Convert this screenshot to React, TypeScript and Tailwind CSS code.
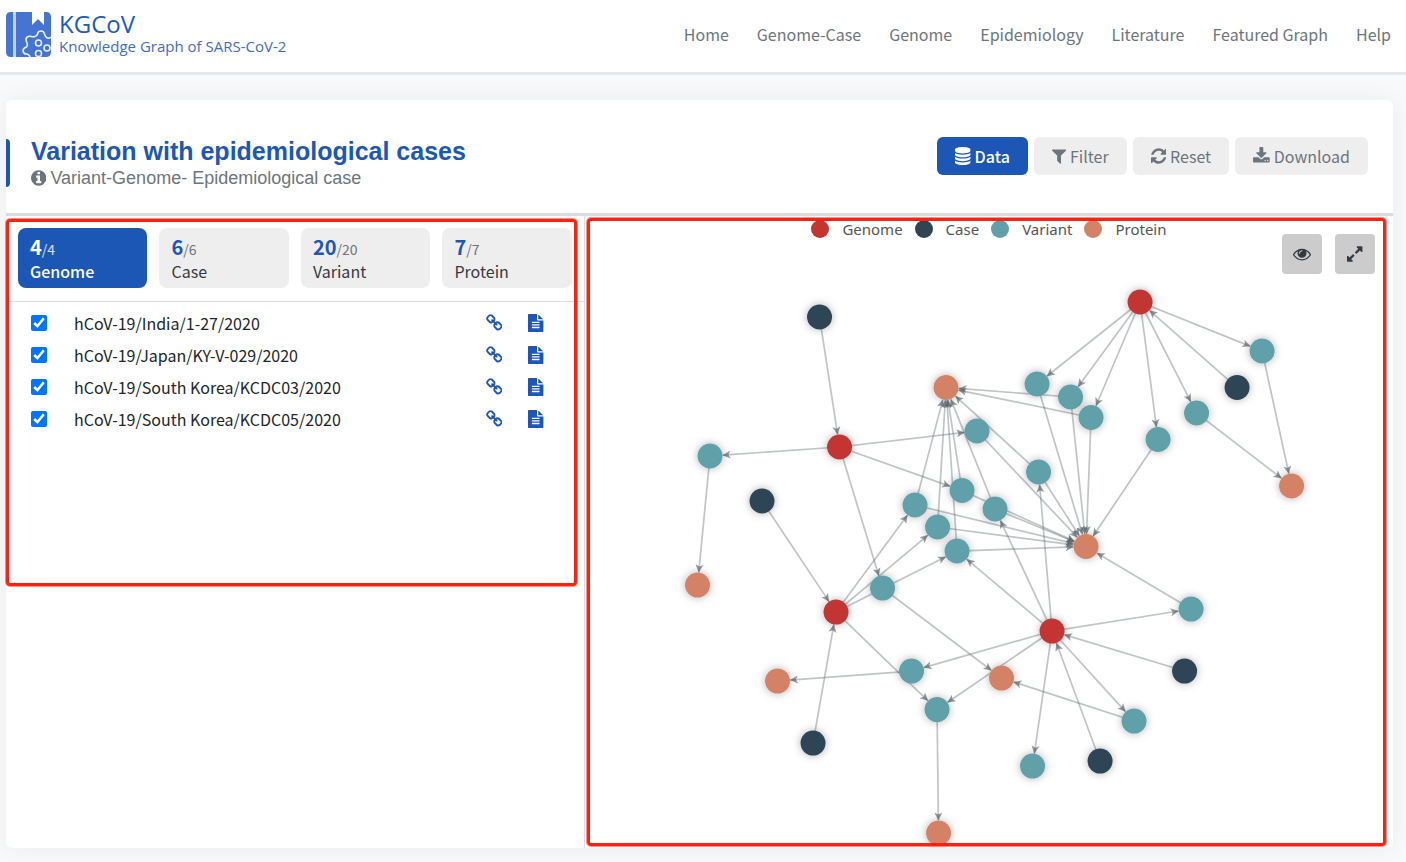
import { useState } from 'react';

type Category = 'Genome' | 'Case' | 'Variant' | 'Protein';

interface GlyphProps {
  name: keyof typeof glyphs;
  className?: string;
}

const glyphs = {
  database: {
    box: '128 0 1536 1792',
    d: 'M896 768q237 0 443-43t325-127v170q0 69-103 128t-280 93.5-385 34.5-385-34.5-280-93.5-103-128v-170q119 84 325 127t443 43zm0 768q237 0 443-43t325-127v170q0 69-103 128t-280 93.5-385 34.5-385-34.5-280-93.5-103-128v-170q119 84 325 127t443 43zm0-384q237 0 443-43t325-127v170q0 69-103 128t-280 93.5-385 34.5-385-34.5-280-93.5-103-128v-170q119 84 325 127t443 43zm0-1152q208 0 385 34.5t280 93.5 103 128v128q0 69-103 128t-280 93.5-385 34.5-385-34.5-280-93.5-103-128v-128q0-69 103-128t280-93.5 385-34.5z',
  },
  filter: {
    box: '192 0 1408 1792',
    d: 'M1595 295q17 41-14 70l-493 493v742q0 42-39 59-13 5-25 5-27 0-45-19l-256-256q-19-19-19-45v-486l-493-493q-31-29-14-70 17-39 59-39h1280q42 0 59 39z',
  },
  refresh: {
    box: '128 0 1536 1792',
    d: 'M1639 1056q0 5-1 7-64 268-268 434.5t-478 166.5q-146 0-282.5-55t-243.5-157l-129 129q-19 19-45 19t-45-19-19-45v-448q0-26 19-45t45-19h448q26 0 45 19t19 45-19 45l-137 137q71 66 161 102t187 36q134 0 250-65t186-179q11-17 53-117 8-23 30-23h192q13 0 22.5 9.5t9.5 22.5zm25-800v448q0 26-19 45t-45 19h-448q-26 0-45-19t-19-45 19-45l138-138q-148-137-349-137-134 0-250 65t-186 179q-11 17-53 117-8 23-30 23h-199q-13 0-22.5-9.5t-9.5-22.5v-7q65-268 270-434.5t480-166.5q146 0 284 55.5t245 156.5l130-129q19-19 45-19t45 19 19 45z',
  },
  download: {
    box: '64 0 1664 1792',
    d: 'M1344 1344q0-26-19-45t-45-19-45 19-19 45 19 45 45 19 45-19 19-45zm256 0q0-26-19-45t-45-19-45 19-19 45 19 45 45 19 45-19 19-45zm128-224v320q0 40-28 68t-68 28h-1472q-40 0-68-28t-28-68v-320q0-40 28-68t68-28h465l135 136q58 56 136 56t136-56l136-136h464q40 0 68 28t28 68zm-325-569q17 41-14 70l-448 448q-18 19-45 19t-45-19l-448-448q-31-29-14-70 17-39 59-39h256v-448q0-26 19-45t45-19h256q26 0 45 19t19 45v448h256q42 0 59 39z',
  },
  eye: {
    box: '0 0 1792 1792',
    d: 'M1664 960q-152-236-381-353 61 104 61 225 0 185-131.5 316.5t-316.5 131.5-316.5-131.5-131.5-316.5q0-121 61-225-229 117-381 353 133 205 333.5 326.5t434.5 121.5 434.5-121.5 333.5-326.5zm-720-384q0-20-14-34t-34-14q-125 0-214.5 89.5t-89.5 214.5q0 20 14 34t34 14 34-14 14-34q0-86 61-147t147-61q20 0 34-14t14-34zm848 384q0 34-20 69-140 230-376.5 368.5t-499.5 138.5-499.5-139-376.5-368q-20-35-20-69t20-69q140-229 376.5-368t499.5-139 499.5 139 376.5 368q20 35 20 69z',
  },
  expand: {
    box: '128 0 1536 1792',
    d: 'M883 1056q0 13-10 23l-332 332 144 144q19 19 19 45t-19 45-45 19h-448q-26 0-45-19t-19-45v-448q0-26 19-45t45-19 45 19l144 144 332-332q10-10 23-10t23 10l114 114q10 10 10 23zm781-864v448q0 26-19 45t-45 19-45-19l-144-144-332 332q-10 10-23 10t-23-10l-114-114q-10-10-10-23t10-23l332-332-144-144q-19-19-19-45t19-45 45-19h448q26 0 45 19t19 45z',
  },
  info: {
    box: '128 0 1536 1792',
    d: 'M1152 1376v-160q0-14-9-23t-23-9h-96v-512q0-14-9-23t-23-9h-320q-14 0-23 9t-9 23v160q0 14 9 23t23 9h96v320h-96q-14 0-23 9t-9 23v160q0 14 9 23t23 9h448q14 0 23-9t9-23zm-128-896v-160q0-14-9-23t-23-9h-192q-14 0-23 9t-9 23v160q0 14 9 23t23 9h192q14 0 23-9t9-23zm640 416q0 209-103 385.5t-279.5 279.5-385.5 103-385.5-103-279.5-279.5-103-385.5 103-385.5 279.5-279.5 385.5-103 385.5 103 279.5 279.5 103 385.5z',
  },
  link: {
    box: '64 0 1664 1792',
    d: 'M1520 1216q0-40-28-68l-208-208q-28-28-68-28-42 0-72 32 3 3 19 18.5t21.5 21.5 15 19 13 25.5 3.5 27.5q0 40-28 68t-68 28q-15 0-27.5-3.5t-25.5-13-19-15-21.5-21.5-18.5-19q-33 31-33 73 0 40 28 68l206 207q27 27 68 27 40 0 68-26l147-146q28-28 28-67zm-703-705q0-40-28-68l-206-207q-28-28-68-28-39 0-68 27l-147 146q-28 28-28 67 0 40 28 68l208 208q27 27 68 27 42 0 72-31-3-3-19-18.5t-21.5-21.5-15-19-13-25.5-3.5-27.5q0-40 28-68t68-28q15 0 27.5 3.5t25.5 13 19 15 21.5 21.5 18.5 19q33-31 33-73zm895 705q0 120-85 203l-147 146q-83 83-203 83-121 0-204-85l-206-207q-83-83-83-203 0-123 88-209l-88-88q-86 88-208 88-120 0-204-84l-208-208q-84-84-84-204t85-203l147-146q83-83 203-83 121 0 204 85l206 207q83 83 83 203 0 123-88 209l88 88q86-88 208-88 120 0 204 84l208 208q84 84 84 204z',
  },
  file: {
    box: '128 0 1536 1792',
    d: 'M1596 476q14 14 28 36h-472v-472q22 14 36 28zm-476 164h544v1056q0 40-28 68t-68 28h-1344q-40 0-68-28t-28-68v-1600q0-40 28-68t68-28h800v544q0 40 28 68t68 28zm160 736v-64q0-14-9-23t-23-9h-704q-14 0-23 9t-9 23v64q0 14 9 23t23 9h704q14 0 23-9t9-23zm0-256v-64q0-14-9-23t-23-9h-704q-14 0-23 9t-9 23v64q0 14 9 23t23 9h704q14 0 23-9t9-23zm0-256v-64q0-14-9-23t-23-9h-704q-14 0-23 9t-9 23v64q0 14 9 23t23 9h704q14 0 23-9t9-23z',
  },
};

const navItems = ['Home', 'Genome-Case', 'Genome', 'Epidemiology', 'Literature', 'Featured Graph', 'Help'];

const tabs: { label: Category; count: number }[] = [
  { label: 'Genome', count: 4 },
  { label: 'Case', count: 6 },
  { label: 'Variant', count: 20 },
  { label: 'Protein', count: 7 },
];

const genomes = [
  'hCoV-19/India/1-27/2020',
  'hCoV-19/Japan/KY-V-029/2020',
  'hCoV-19/South Korea/KCDC03/2020',
  'hCoV-19/South Korea/KCDC05/2020',
];

const legend: { label: Category; dot: string }[] = [
  { label: 'Genome', dot: 'bg-[#c23531]' },
  { label: 'Case', dot: 'bg-[#2f4554]' },
  { label: 'Variant', dot: 'bg-[#61a0a8]' },
  { label: 'Protein', dot: 'bg-[#d48265]' },
];

const fills: Record<string, string> = { g: '#c23531', c: '#2f4554', v: '#61a0a8', p: '#d48265' };

// first letter of the id is the category
const nodes: Record<string, [number, number]> = {
  g1: [1140, 302], g2: [839.5, 447], g3: [836, 612], g4: [1052, 631],
  c1: [819.5, 317], c2: [1237, 387.5], c3: [762, 501], c4: [813, 743], c5: [1184.5, 671], c6: [1100, 761],
  v1: [1037, 384], v2: [1070.5, 397], v3: [1091, 417.5], v4: [1158, 439.5], v5: [1196.5, 413],
  v6: [1262, 351], v7: [977, 431], v8: [1038.5, 472], v9: [962, 490.5], v10: [915, 505],
  v11: [995, 509], v12: [937.5, 527], v13: [957, 551], v14: [710, 456], v15: [882.5, 588],
  v16: [911.5, 671], v17: [937, 709.5], v18: [1032.5, 766], v19: [1134, 721], v20: [1191, 609],
  p1: [946, 387.5], p2: [1291.5, 486], p3: [1086, 546.5], p4: [697.5, 585], p5: [777.5, 681],
  p6: [1001.5, 678], p7: [938.5, 833],
};

const links: Record<string, string[]> = {
  c1: ['g2'], c2: ['g1'], c3: ['g3'], c4: ['g3'], c5: ['g4'], c6: ['g4'],
  g1: ['v1', 'v2', 'v3', 'v4', 'v5', 'v6'],
  g2: ['v7', 'v9', 'v14', 'v15'],
  g3: ['v10', 'v12', 'v13', 'v17'],
  g4: ['v8', 'v11', 'v13', 'v16', 'v17', 'v18', 'v19', 'v20'],
  v1: ['p3'], v2: ['p1', 'p3'], v3: ['p1', 'p3'], v4: ['p3'], v5: ['p2'], v6: ['p2'], v7: ['p3'],
  v8: ['p1', 'p3'], v9: ['p1', 'p3'], v10: ['p1', 'p3'], v11: ['p1', 'p3'], v12: ['p1', 'p3'],
  v13: ['p1', 'p3'], v14: ['p4'], v15: ['p6'], v16: ['p5'], v17: ['p7'], v19: ['p6'], v20: ['p3'],
};

const RADIUS = 12.5;

function Glyph({ name, className }: GlyphProps) {
  return (
    <svg viewBox={glyphs[name].box} className={className} fill="currentColor" aria-hidden="true">
      <path d={glyphs[name].d} />
    </svg>
  );
}

function Logo() {
  return (
    <a href="#" className="flex items-center gap-2 font-['Open_Sans',sans-serif] text-[#2059b6]">
      <svg viewBox="0 0 45 45" className="size-[45px]" aria-hidden="true">
        <path fill="#4674d2" d="M5 0H7V45H5Q0 45 0 40V5Q0 0 5 0zM10 0H26V13L32 7L38 13V0H40Q45 0 45 5V40Q45 45 40 45H10z" />
        <path fill="#c3d3f1" d="M7 0h3v45H7z" />
        <g fill="none" stroke="#e8effb" strokeWidth="1.6" strokeLinejoin="round">
          <path d="M45 25Q43 27 40.500 25.500Q39 24 38.500 22Q38 19 35 19Q32 19 31.500 22Q31 24 29 24.500Q27 25 25.500 24.500Q21 23.500 20 27Q20 29 21 31Q22 33 20.500 35Q17 36 17 39Q17.500 42 20.500 42Q23 42 24 45" />
          <circle cx="32.500" cy="31" r="3" />
          <circle cx="41" cy="36" r="3" />
          <circle cx="32.500" cy="41.500" r="3" />
        </g>
      </svg>
      <span className="flex flex-col">
        <span className="text-2xl leading-6 font-medium">KGCoV</span>
        <span className="text-[15px] leading-5 text-[#3f6dc2]">Knowledge Graph of SARS-CoV-2</span>
      </span>
    </a>
  );
}

function RelationGraph() {
  return (
    <svg viewBox="585 216 808 632" className="block w-full" role="img" aria-label="Variation graph">
      <defs>
        <marker id="tip" markerUnits="userSpaceOnUse" markerWidth="10" markerHeight="10" refX="8" refY="5" orient="auto">
          <path d="M8 5L0 9L2 5L0 1z" fill="#59646a" fillOpacity="0.65" />
        </marker>
        <filter id="glow" x="-80%" y="-80%" width="260%" height="260%">
          <feDropShadow dx="0" dy="0" stdDeviation="4.5" floodColor="#000" floodOpacity="0.3" />
        </filter>
      </defs>
      {Object.entries(links).flatMap(([from, targets]) =>
        targets.map((to) => {
          const [x1, y1] = nodes[from];
          const [x2, y2] = nodes[to];
          const k = RADIUS / Math.hypot(x2 - x1, y2 - y1);
          return (
            <line
              key={`${from}-${to}`}
              x1={x1}
              y1={y1}
              x2={x2 - (x2 - x1) * k}
              y2={y2 - (y2 - y1) * k}
              stroke="#5f6b71"
              strokeOpacity="0.4"
              strokeWidth="1.7"
              markerEnd="url(#tip)"
            />
          );
        })
      )}
      {Object.entries(nodes).map(([id, [cx, cy]]) => (
        <circle key={id} cx={cx} cy={cy} r={RADIUS} fill={fills[id[0]]} filter="url(#glow)" />
      ))}
    </svg>
  );
}

export default function App() {
  const [activeTab, setActiveTab] = useState<Category>('Genome');
  const [checked, setChecked] = useState<string[]>(genomes);

  const toggle = (name: string) => {
    setChecked(prev => (prev.includes(name) ? prev.filter(n => n !== name) : [...prev, name]));
  };

  const grayButton = 'flex h-[38px] items-center gap-1 rounded-md bg-[#eeeeee] px-[18px] text-[#6c757d]';

  return (
    <div className="min-h-screen bg-[#f8f9fb] pb-3.5 font-['Noto_Sans_CJK_SC',sans-serif] text-base text-[#212529]">
      <header className="flex h-[75px] items-center justify-between border-b-3 border-[#e7e7e7] bg-white pr-[15px] pb-1 pl-1.5">
        <Logo />
        <nav className="flex gap-7 leading-6 text-[#6c757d]">
          {navItems.map((item) => (
            <a key={item} href="#">{item}</a>
          ))}
        </nav>
      </header>

      <main className="mt-[25px] mr-[13px] ml-1.5 rounded-md bg-white shadow-[0_0_24px_rgba(0,0,0,0.06)]">
        <div className="flex h-[116px] items-center justify-between border-b-3 border-[#dcdcdc] pr-[25px] pb-0.5">
          <div className="flex items-end gap-[21px]">
            <span className="mb-0.5 h-12 w-1 rounded-r-sm bg-[#1c57b5]" />
            <div className="pt-3 font-['Liberation_Sans',sans-serif]">
              <h1 className="text-[25px] leading-8 font-bold text-[#1c57b5]">Variation with epidemiological cases</h1>
              <p className="flex items-center gap-1 text-lg leading-[22px] text-[#6c757d]">
                <Glyph name="info" className="h-[18px]" />
                Variant-Genome- Epidemiological case
              </p>
            </div>
          </div>
          <div className="flex gap-1.5">
            <button type="button" className="flex h-[38px] items-center gap-1 rounded-md bg-[#1c57b5] px-[18px] font-medium text-white">
              <Glyph name="database" className="h-[18px]" />
              Data
            </button>
            <button type="button" className={grayButton}>
              <Glyph name="filter" className="h-[18px]" />
              Filter
            </button>
            <button type="button" className={grayButton}>
              <Glyph name="refresh" className="h-[18px]" />
              Reset
            </button>
            <button type="button" className={grayButton}>
              <Glyph name="download" className="h-[18px]" />
              Download
            </button>
          </div>
        </div>

        <div className="grid grid-cols-12">
          {/* Entity lists */}
          <section className="relative col-span-5">
            <div className="grid grid-cols-4 gap-3 border-b border-[#dcdcdc] p-3 pb-[13px]">
              {tabs.map(({ label, count }) => (
                <button
                  key={label}
                  type="button"
                  onClick={() => setActiveTab(label)}
                  className={`flex h-[60px] flex-col justify-center rounded-lg px-3 pt-0.5 text-left ${
                    activeTab === label ? 'bg-[#1c57b5] font-medium text-white' : 'bg-[#eeeeee] text-[#343a40]'
                  }`}
                >
                  <span className="leading-[22px]">
                    <span className={`text-xl leading-[22px] font-bold ${activeTab === label ? 'text-white' : 'text-[#1c57b5]'}`}>{count}</span>
                    <span className={`text-sm leading-[22px] font-normal ${activeTab === label ? 'text-white/80' : 'text-[#6c757d]'}`}>/{count}</span>
                  </span>
                  <span className="leading-[22px]">{label}</span>
                </button>
              ))}
            </div>
            <table className="mt-[5px] w-full table-fixed">
              <tbody>
                {genomes.map((name, index) => (
                  <tr key={name} className="h-8">
                    <td className="w-[68px] pl-[25px]">
                      <input
                        id={`genome-${index}`}
                        type="checkbox"
                        checked={checked.includes(name)}
                        onChange={() => toggle(name)}
                        className="block size-4 accent-[#0075ff]"
                      />
                    </td>
                    <td className="leading-6">
                      <label htmlFor={`genome-${index}`}>{name}</label>
                    </td>
                    <td className="w-[42px] text-[#1c57b5]">
                      <a href="#" aria-label={`Link to ${name}`} className="flex justify-center">
                        <Glyph name="link" className="h-[18px]" />
                      </a>
                    </td>
                    <td className="w-[42px] text-[#1c57b5]">
                      <a href="#" aria-label={`Details of ${name}`} className="flex justify-center">
                        <Glyph name="file" className="h-[18px]" />
                      </a>
                    </td>
                    <td className="w-[27px]" />
                  </tr>
                ))}
              </tbody>
            </table>
            {/* highlight frame */}
            <div className="pointer-events-none absolute top-[3px] right-[7px] left-0 h-[367px] rounded-sm border-3 border-[#ff2010] ring-1 ring-[#ff2010]/50" />
          </section>

          {/* Graph */}
          <section className="relative col-span-7 border-l border-[#dcdcdc]">
            <RelationGraph />
            <div className="absolute inset-x-0 top-0 flex justify-center gap-3 font-['Noto_Sans',sans-serif] text-[15px] leading-[26px] text-[#555555]">
              {legend.map(({ label, dot }) => (
                <span key={label} className="flex items-center gap-[13px]">
                  <span className={`size-[18px] rounded-full ${dot}`} />
                  {label}
                </span>
              ))}
            </div>
            <div className="absolute top-[18px] right-[18px] flex gap-[13px]">
              <button type="button" aria-label="Show labels" className="flex size-10 items-center justify-center rounded bg-[#cccccc] text-[#343a40]">
                <Glyph name="eye" className="h-[18px]" />
              </button>
              <button type="button" aria-label="Full screen" className="flex size-10 items-center justify-center rounded bg-[#cccccc] text-[#343a40]">
                <Glyph name="expand" className="h-[18px]" />
              </button>
            </div>
            <div className="pointer-events-none absolute top-0.5 right-[7px] bottom-0.5 left-0.5 rounded-sm border-3 border-[#ff2010] ring-1 ring-[#ff2010]/50" />
          </section>
        </div>
      </main>
    </div>
  );
}
